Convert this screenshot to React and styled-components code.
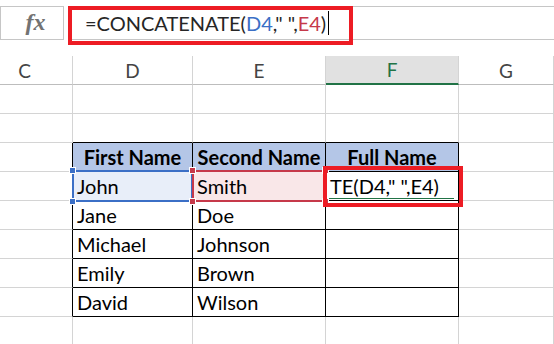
import React from "react";
import styled, { createGlobalStyle } from "styled-components";

const Global = createGlobalStyle`
  html, body { margin: 0; padding: 0; background: #fff; overflow: hidden; }
  body { font-family: Lato, "Open Sans", sans-serif; }
`;

const Page = styled.div`
  width: 554px;
  height: 344px;
  overflow: hidden;
  background: #fff;
`;

const FormulaBar = styled.div`
  display: flex;
  align-items: stretch;
  margin-top: 6px;
  height: 34px;
`;

const FxBox = styled.div`
  width: 64px;
  box-sizing: border-box;
  border: 1px solid #c6c6c6;
  display: flex;
  align-items: center;
  justify-content: center;
  padding-left: 7px;
  padding-bottom: 2px;
  font-family: "Liberation Serif", "DejaVu Serif", serif;
  font-style: italic;
  font-weight: bold;
  font-size: 24px;
  color: #737373;
  letter-spacing: 0px;
`;

const FormulaInput = styled.div`
  position: relative;
  flex: 1;
  margin-left: 4px;
  box-sizing: border-box;
  border-top: 1px solid #c6c6c6;
  border-bottom: 1px solid #c6c6c6;
  display: flex;
  align-items: center;
  padding-left: 17px;
  font-size: 20px;
  color: #262626;
  white-space: pre;
`;

const Ref = styled.span`
  color: ${(p) => p.$color};
`;

const Caret = styled.span`
  display: inline-block;
  width: 1px;
  height: 24px;
  background: #000;
  margin-left: 2px;
  vertical-align: middle;
`;

const Callout = styled.div`
  position: absolute;
  z-index: 5;
  box-sizing: border-box;
  border: 4px solid #ed1c24;
  pointer-events: none;
  left: ${(p) => p.$left}px;
  top: ${(p) => p.$top}px;
  width: ${(p) => p.$w}px;
  height: ${(p) => p.$h}px;
`;

const Sheet = styled.div`
  display: grid;
  grid-template-columns: 73px 120px 133px 133px 1fr;
  grid-auto-rows: 29px;
  margin-top: 16px;
`;

const ColHeader = styled.div`
  box-sizing: border-box;
  border-right: 1px solid #d4d4d4;
  border-bottom: ${(p) => (p.$active ? "2px solid #217346" : "1px solid #bdbdbd")};
  background: ${(p) => (p.$active ? "#e1e1e1" : "#fff")};
  color: ${(p) => (p.$active ? "#217346" : "#444")};
  display: flex;
  align-items: center;
  justify-content: center;
  padding-right: ${(p) => p.$padRight || 0}px;
  font-size: 19px;
`;

const Cell = styled.div`
  position: relative;
  box-sizing: border-box;
  border-right: 1px solid ${(p) => (p.$blackRight ? "#000" : "#d4d4d4")};
  border-bottom: 1px solid ${(p) => (p.$blackBottom ? "#000" : "#d4d4d4")};
  background: ${(p) => p.$bg || "#fff"};
  display: flex;
  align-items: center;
  justify-content: ${(p) => (p.$head ? "center" : "flex-start")};
  padding-left: ${(p) => (p.$head ? 0 : 4)}px;
  font-size: 20px;
  font-weight: ${(p) => (p.$head ? 700 : 400)};
  color: #000;
  white-space: nowrap;
`;

const Selection = styled.div`
  position: absolute;
  z-index: 2;
  left: -1px;
  top: -2px;
  right: -1px;
  bottom: -2px;
  border: 2px solid ${(p) => p.$color};
  pointer-events: none;
`;

const Handle = styled.span`
  position: absolute;
  width: 5px;
  height: 5px;
  background: ${(p) => p.$color};
  border: 1px solid #fff;
  ${(p) => (p.$x === "l" ? "left: -5px;" : "right: -5px;")}
  ${(p) => (p.$y === "t" ? "top: -5px;" : "bottom: -5px;")}
`;

const EditUnderline = styled.div`
  position: absolute;
  left: 2px;
  right: 4px;
  bottom: 1px;
  height: 1px;
  background: #217346;
`;

const BLUE = "#3b6fc6";
const RED = "#c6394a";

function SelectBox({ color }) {
  return (
    <Selection $color={color}>
      <Handle $color={color} $x="l" $y="t" />
      <Handle $color={color} $x="r" $y="t" />
      <Handle $color={color} $x="l" $y="b" />
      <Handle $color={color} $x="r" $y="b" />
    </Selection>
  );
}

const data = [
  ["John", "Smith"],
  ["Jane", "Doe"],
  ["Michael", "Johnson"],
  ["Emily", "Brown"],
  ["David", "Wilson"],
];

export default function App() {
  // body rows: 0,1 empty; 2 header; 3..7 data; 8 empty
  const rows = [];
  for (let r = 0; r < 9; r++) {
    const inTable = r >= 2 && r <= 7;
    for (let c = 0; c < 5; c++) {
      const key = `${r}-${c}`;
      const inCols = c >= 1 && c <= 3;
      const blackRight = inTable && c <= 3;
      const blackBottom = inCols && r >= 1 && r <= 7;
      let content = null;
      let bg;
      let head = false;
      let overlay = null;
      if (r === 2 && inCols) {
        head = true;
        bg = "#b4c6e7";
        content = ["First Name", "Second Name", "Full Name"][c - 1];
      } else if (r >= 3 && r <= 7 && (c === 1 || c === 2)) {
        content = data[r - 3][c - 1];
      }
      if (r === 3 && c === 1) {
        bg = "#e8eef9";
        overlay = <SelectBox color={BLUE} />;
      }
      if (r === 3 && c === 2) {
        bg = "#f9e7e8";
        overlay = <SelectBox color={RED} />;
      }
      if (r === 3 && c === 3) {
        content = 'TE(D4," ",E4)';
        overlay = (
          <>
            <EditUnderline />
            <Callout $left={-3} $top={-6} $w={140} $h={41} />
          </>
        );
      }
      rows.push(
        <Cell
          key={key}
          $blackRight={blackRight}
          $blackBottom={blackBottom}
          $bg={bg}
          $head={head}
        >
          {content}
          {overlay}
        </Cell>
      );
    }
  }

  return (
    <Page>
      <Global />
      <FormulaBar>
        <FxBox>fx</FxBox>
        <FormulaInput>
          {"=CONCATENATE("}
          <Ref $color={BLUE}>D4</Ref>
          {'," ",'}
          <Ref $color={RED}>E4</Ref>
          {")"}
          <Caret />
          <Callout $left={0} $top={-1} $w={285} $h={39} />
        </FormulaInput>
      </FormulaBar>
      <Sheet>
        <ColHeader $padRight={23}>C</ColHeader>
        <ColHeader>D</ColHeader>
        <ColHeader>E</ColHeader>
        <ColHeader $active>F</ColHeader>
        <ColHeader>G</ColHeader>
        {rows}
      </Sheet>
    </Page>
  );
}
